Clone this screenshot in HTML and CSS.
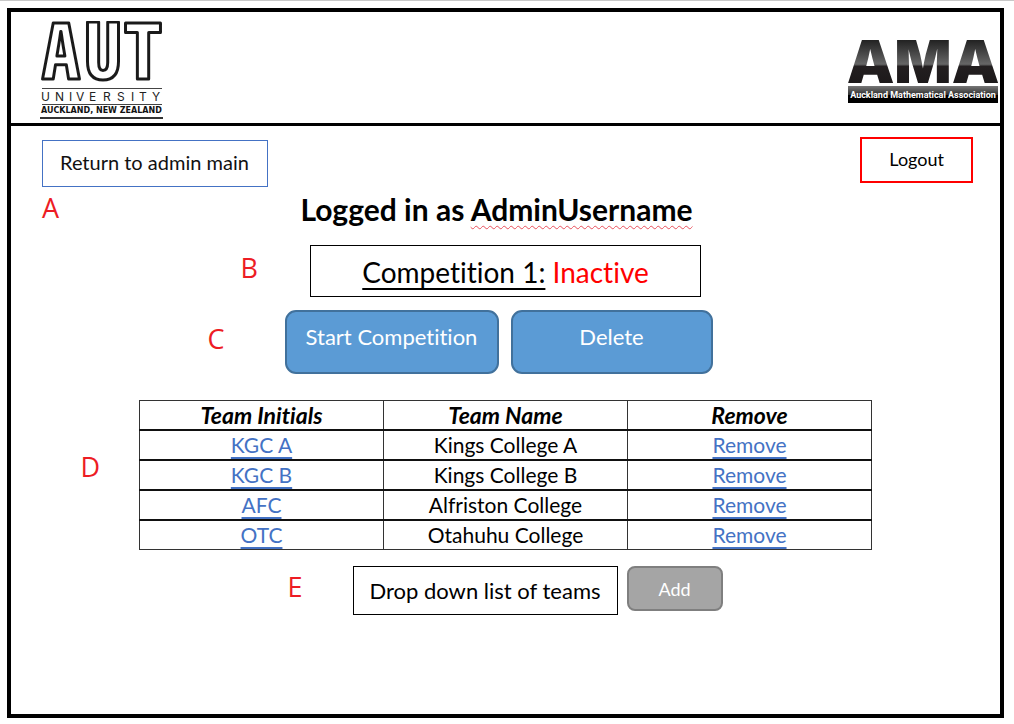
FILE: index.html
```html
<!DOCTYPE html>
<html lang="en">
<head>
<meta charset="utf-8">
<meta name="viewport" content="width=device-width, initial-scale=1">
<title>Competition admin</title>
<link rel="stylesheet" href="styles.css">
</head>
<body>
<div class="frame">
  <header class="header">
    <svg class="logo-aut" viewBox="0 0 126 98" role="img" aria-label="AUT University">
      <text class="aut-big" y="58"><tspan x="3">A</tspan><tspan x="45">U</tspan><tspan x="85">T</tspan></text>
      <path d="M3 67.500H123M3 83.500H123" stroke="#444" stroke-width="1"/>
      <text class="aut-mid" x="2 16 30 37 50 64 78 92 100 113" y="80">UNIVERSITY</text>
      <text class="aut-small" x="2" y="92">AUCKLAND, NEW ZEALAND</text>
      <path d="M1 97H124" stroke="#333" stroke-width="2"/>
    </svg>
    <svg class="logo-ama" viewBox="0 0 152 64" role="img" aria-label="Auckland Mathematical Association">
      <defs>
        <linearGradient id="ama-fill" x1="0" y1="0" x2="0" y2="44" gradientUnits="userSpaceOnUse">
          <stop offset="0" stop-color="#222"/>
          <stop offset="0.55" stop-color="#666"/>
          <stop offset="0.6" stop-color="#231f20"/>
          <stop offset="1" stop-color="#1c191a"/>
        </linearGradient>
        <linearGradient id="ama-bar" x1="0" y1="0" x2="0" y2="1">
          <stop offset="0" stop-color="#777"/>
          <stop offset="0.5" stop-color="#333"/>
          <stop offset="0.55" stop-color="#000"/>
          <stop offset="1" stop-color="#000"/>
        </linearGradient>
      </defs>
      <text class="ama-big" x="76" y="43">AMA</text>
      <rect x="1" y="46" width="150" height="17" fill="url(#ama-bar)"/>
      <text class="ama-small" x="76" y="58">Auckland Mathematical Association</text>
    </svg>
  </header>
  <main class="main">
    <nav class="toolbar">
      <a class="box-link" href="#main">Return to admin main</a>
      <button class="logout" type="button">Logout</button>
    </nav>
    <section class="row row-user">
      <span class="note">A</span>
      <h1 class="title">Logged in as <span class="username">AdminUsername</span></h1>
    </section>
    <section class="row row-status">
      <span class="note">B</span>
      <p class="status"><span class="status-name">Competition 1:</span> <span class="status-value">Inactive</span></p>
    </section>
    <section class="row row-actions">
      <span class="note">C</span>
      <div class="actions">
        <button class="action action-start" type="button">Start Competition</button>
        <button class="action" type="button">Delete</button>
      </div>
    </section>
    <section class="row row-table">
      <span class="note">D</span>
      <table class="teams">
        <thead>
          <tr><th scope="col">Team Initials</th><th scope="col">Team Name</th><th scope="col">Remove</th></tr>
        </thead>
        <tbody>
          <tr><td><a href="#kgca">KGC A</a></td><td>Kings College A</td><td><a href="#remove-kgca">Remove</a></td></tr>
          <tr><td><a href="#kgcb">KGC B</a></td><td>Kings College B</td><td><a href="#remove-kgcb">Remove</a></td></tr>
          <tr><td><a href="#afc">AFC</a></td><td>Alfriston College</td><td><a href="#remove-afc">Remove</a></td></tr>
          <tr><td><a href="#otc">OTC</a></td><td>Otahuhu College</td><td><a href="#remove-otc">Remove</a></td></tr>
        </tbody>
      </table>
    </section>
    <section class="row row-add">
      <span class="note">E</span>
      <form class="add-form">
        <select class="team-select" aria-label="Team to add"><option>Drop down list of teams</option></select>
        <button class="add" type="button">Add</button>
      </form>
    </section>
  </main>
</div>
</body>
</html>
```
FILE: styles.css
```css
* { box-sizing: border-box; }

body {
  margin: 0;
  min-height: 100vh;
  padding: 7px 10px 6px 7px;
  border-top: 1px solid #c8c8c8;
  display: flex;
  background: #fff;
  color: #000;
  font-family: Lato, "Open Sans", sans-serif;
  font-size: 20px;
  line-height: 24px;
  font-variant-ligatures: none;
}

button, select { font: inherit; color: inherit; font-variant-ligatures: none; }

.frame {
  flex: 1;
  border: 4px solid #000;
}

.header {
  display: flex;
  justify-content: space-between;
  align-items: flex-start;
  padding: 9px 1px 4px 28px;
  border-bottom: 3px solid #000;
}

.logo-aut { width: 126px; height: 98px; }
.logo-ama { width: 152px; height: 64px; margin-top: 19px; }

.aut-big {
  font: bold 76px "Noto Sans Mono CJK SC", "Noto Sans CJK SC", sans-serif;
  fill: #fff;
  stroke: #1a1a1a;
  stroke-width: 3px;
  stroke-linejoin: round;
}
.aut-mid { font: 12px Inter, sans-serif; fill: #222; }
.aut-small { font: bold 8px "DejaVu Sans", sans-serif; fill: #111; }
.ama-big { font: 900 60px Inter, sans-serif; fill: url(#ama-fill); text-anchor: middle; }
.ama-small { font: bold 9px Roboto, sans-serif; fill: #fff; text-anchor: middle; }

.toolbar {
  display: flex;
  justify-content: space-between;
  align-items: flex-start;
  padding: 11px 27px 0 31px;
}

.box-link {
  margin-top: 3px;
  padding: 9px 18px 12px 17px;
  border: 1px solid #4472c4;
  color: #111;
  text-decoration: none;
}

.logout {
  padding: 8px 27px 10px;
  border: 2px solid #f00;
  background: #fff;
  font-size: 18px;
}

.row {
  display: grid;
  grid-template-columns: 1fr auto 1fr;
  align-items: center;
}

.note {
  justify-self: end;
  margin-bottom: 8px;
  color: #ed1c24;
  font: 27px "Open Sans", sans-serif;
}

.row-user { padding-right: 18px; }
.row-user .note { justify-self: start; margin: 0 0 18px 31px; }
.title { margin: 3px 0 17px; font-size: 30px; line-height: 38px; }
.username { text-decoration: underline wavy #e8505b 1px; text-underline-offset: 4px; }

.row-status .note { margin-right: 52px; }
.status {
  width: 391px;
  margin: 0;
  padding: 9px 0 7px;
  border: 1px solid #000;
  font-size: 28px;
  line-height: 34px;
  text-align: center;
}
.status-name { text-decoration: underline 2px; text-underline-offset: 5px; }
.status-value { color: #f00; }

.row-actions { padding: 13px 14px 0 0; }
.row-actions .note { margin-right: 60px; }
.actions { display: flex; gap: 12px; }
.action {
  width: 202px;
  padding: 13px 0 23px;
  border: 2px solid #41719c;
  border-radius: 11px;
  background: #5b9bd5;
  color: #fff;
  font-size: 22px;
  line-height: 24px;
}
.action-start { width: 214px; }

.row-table { padding-top: 26px; }
.row-table .note { margin: 0 39px 18px 0; }
.teams {
  width: 733px;
  border-collapse: collapse;
  table-layout: fixed;
  border: 1px solid #333;
  font-size: 21px;
}
.teams th, .teams td {
  padding: 2px 0;
  border: 1px solid #333;
  border-bottom: 2px solid #111;
  line-height: 24px;
  text-align: center;
}
.teams tr:last-child td { border-bottom: 1px solid #333; }
.teams th { font-size: 23px; font-style: italic; font-weight: 700; border-bottom: 2px solid #111; }
.teams a { color: #4472c4; text-decoration: underline 2px; text-underline-offset: 4px; }

.row-add { padding: 16px 0 0 64px; }
.row-add .note { margin-right: 50px; }
.add-form { display: flex; align-items: flex-start; gap: 9px; }
.team-select {
  appearance: none;
  width: 265px;
  height: 49px;
  padding: 0;
  border: 1px solid #000;
  border-radius: 0;
  background: #fff;
  font-size: 22px;
  text-align: center;
  text-align-last: center;
}
.add {
  width: 96px;
  height: 45px;
  border: 2px solid #7f7f7f;
  border-radius: 8px;
  background: #a5a5a5;
  color: #fff;
  font-size: 18px;
}
```
